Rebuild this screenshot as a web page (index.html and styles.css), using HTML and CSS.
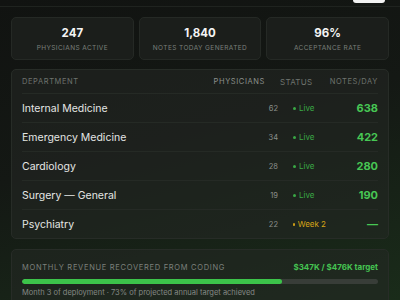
FILE: index.html
```html
<!DOCTYPE html>
<html>
<head>
    <title>Coding Rollout Dashboard</title>
    <link rel="stylesheet" href="styles.css">
</head>
<body>
    <div class="topbar">
        <span class="top-button"></span>
    </div>

    <div class="stats">
        <div class="stat">
            <div class="stat-value">247</div>
            <div class="stat-label">Physicians active</div>
        </div>
        <div class="stat">
            <div class="stat-value">1,840</div>
            <div class="stat-label">Notes today generated</div>
        </div>
        <div class="stat">
            <div class="stat-value">96%</div>
            <div class="stat-label">Acceptance rate</div>
        </div>
    </div>

    <div class="panel table">
        <div class="row head">
            <div>Department</div>
            <div class="phys">Physicians</div>
            <div class="status">Status</div>
            <div class="notes">Notes/day</div>
        </div>
        <div class="row">
            <div class="dept">Internal Medicine</div>
            <div class="phys">62</div>
            <div class="status live"><span class="dot"></span>Live</div>
            <div class="notes">638</div>
        </div>
        <div class="row">
            <div class="dept">Emergency Medicine</div>
            <div class="phys">34</div>
            <div class="status live"><span class="dot"></span>Live</div>
            <div class="notes">422</div>
        </div>
        <div class="row">
            <div class="dept">Cardiology</div>
            <div class="phys">28</div>
            <div class="status live"><span class="dot"></span>Live</div>
            <div class="notes">280</div>
        </div>
        <div class="row">
            <div class="dept">Surgery — General</div>
            <div class="phys">19</div>
            <div class="status live"><span class="dot"></span>Live</div>
            <div class="notes">190</div>
        </div>
        <div class="row">
            <div class="dept">Psychiatry</div>
            <div class="phys">22</div>
            <div class="status pending"><span class="dot"></span>Week 2</div>
            <div class="notes">—</div>
        </div>
    </div>

    <div class="panel revenue">
        <div class="rev-head">
            <span class="rev-title">Monthly revenue recovered from coding</span>
            <span class="rev-amount">$347K / $476K target</span>
        </div>
        <div class="bar"><div class="bar-fill" style="width: 73%"></div></div>
        <div class="rev-note">Month 3 of deployment · 73% of projected annual target achieved</div>
    </div>
</body>
</html>
```

FILE: styles.css
```css
html, body {
    height: 100%;
}
body {
    margin: 0;
    padding: 0 11px;
    font-family: Inter, "Noto Sans", sans-serif;
    color: #e2e4e2;
    background: linear-gradient(165deg, #111311 0%, #141814 45%, #1a2c1a 100%);
    overflow: hidden;
}
.topbar {
    height: 6px;
    margin: 0 -11px;
    border-bottom: 1px solid #1f231f;
    display: flex;
    justify-content: flex-end;
    padding-right: 15px;
}
.top-button {
    width: 32px;
    height: 3px;
    background: #f2f2f2;
    border-radius: 0 0 4px 4px;
}
.stats {
    display: grid;
    grid-template-columns: 1fr 1fr 1fr;
    gap: 5px;
    margin-top: 10px;
}
.stat {
    height: 43px;
    box-sizing: border-box;
    background: #1b1e1b;
    border: 1px solid #252925;
    border-radius: 5px;
    text-align: center;
    padding-top: 8px;
}
.stat-value {
    font-size: 11.5px;
    font-weight: 700;
    color: #f4f4f4;
    line-height: 14px;
}
.stat-label {
    margin-top: 4px;
    font-size: 6.5px;
    letter-spacing: 0.4px;
    text-transform: uppercase;
    color: #7a7e7a;
}
.panel {
    background: rgba(36, 40, 36, 0.55);
    border: 1px solid #272c27;
    border-radius: 5px;
}
.table {
    margin-top: 9px;
    padding: 0 10px;
}
.row {
    display: grid;
    grid-template-columns: 1fr 72px 48px 52px;
    align-items: center;
    height: 28px;
    border-bottom: 1px solid #252a25;
}
.row:last-child {
    border-bottom: none;
}
.row.head {
    height: 23px;
    font-size: 7.5px;
    letter-spacing: 0.6px;
    text-transform: uppercase;
    color: #6e736e;
}
.head .phys {
    padding-right: 13px;
}
.head .status {
    padding-left: 2px;
    letter-spacing: 0.3px;
}
.dept {
    font-size: 10.5px;
    color: #e4e6e4;
}
.phys {
    text-align: right;
    font-size: 7.5px;
    color: #8c908c;
}
.status {
    padding-left: 15px;
    font-size: 8px;
    white-space: nowrap;
    display: flex;
    align-items: center;
}
.dot {
    width: 3px;
    height: 3px;
    border-radius: 50%;
    margin-right: 3px;
    background: currentColor;
}
.live {
    color: #3aa845;
}
.pending {
    color: #d6a417;
}
.notes {
    text-align: right;
}
.row:not(.head) .notes {
    font-size: 11px;
    font-weight: 700;
    color: #47c754;
}
.revenue {
    margin-top: 10px;
    padding: 12px 10px 10px;
}
.rev-head {
    display: flex;
    justify-content: space-between;
    align-items: center;
}
.rev-title {
    font-size: 7.5px;
    letter-spacing: 0.7px;
    text-transform: uppercase;
    color: #7c807c;
}
.rev-amount {
    font-size: 8px;
    font-weight: 700;
    color: #45c452;
}
.bar {
    margin-top: 7px;
    height: 5px;
    border-radius: 3px;
    background: #383d38;
    overflow: hidden;
}
.bar-fill {
    height: 100%;
    border-radius: 3px;
    background: #3cc34a;
}
.rev-note {
    margin-top: 4px;
    font-size: 7.5px;
    color: #858985;
}
```
